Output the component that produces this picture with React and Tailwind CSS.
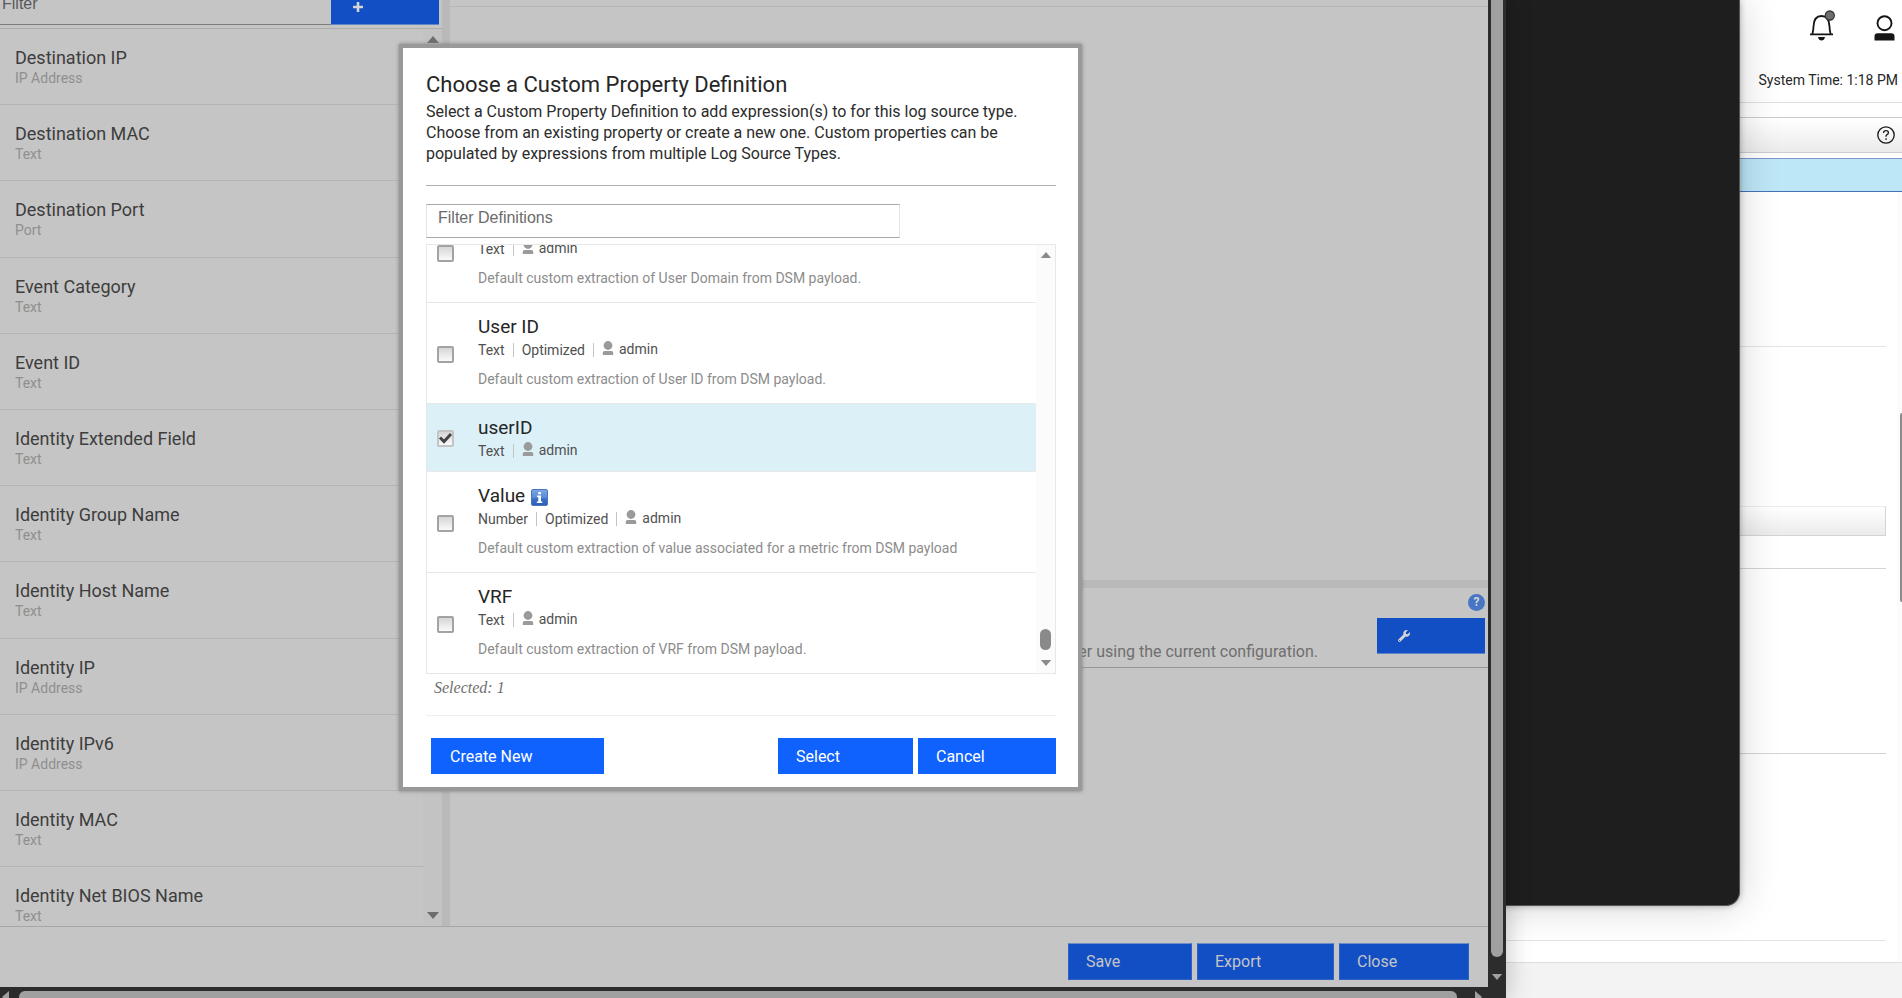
import { useState } from 'react';
import { FaWrench } from 'react-icons/fa';

const PROPERTIES = [
  { name: 'Destination IP', type: 'IP Address' },
  { name: 'Destination MAC', type: 'Text' },
  { name: 'Destination Port', type: 'Port' },
  { name: 'Event Category', type: 'Text' },
  { name: 'Event ID', type: 'Text' },
  { name: 'Identity Extended Field', type: 'Text' },
  { name: 'Identity Group Name', type: 'Text' },
  { name: 'Identity Host Name', type: 'Text' },
  { name: 'Identity IP', type: 'IP Address' },
  { name: 'Identity IPv6', type: 'IP Address' },
  { name: 'Identity MAC', type: 'Text' },
  { name: 'Identity Net BIOS Name', type: 'Text' },
];

const DEFINITIONS = [
  {
    id: 'user-domain',
    name: 'User Domain',
    meta: ['Text'],
    description: 'Default custom extraction of User Domain from DSM payload.',
  },
  {
    id: 'user-id',
    name: 'User ID',
    meta: ['Text', 'Optimized'],
    description: 'Default custom extraction of User ID from DSM payload.',
  },
  { id: 'userid', name: 'userID', meta: ['Text'] },
  {
    id: 'value',
    name: 'Value',
    info: true,
    meta: ['Number', 'Optimized'],
    description: 'Default custom extraction of value associated for a metric from DSM payload',
  },
  {
    id: 'vrf',
    name: 'VRF',
    meta: ['Text'],
    description: 'Default custom extraction of VRF from DSM payload.',
  },
];

function Triangle({ className, points = '0,7 6,0 12,7', box = '0 0 12 7' }) {
  return (
    <svg viewBox={box} className={className} fill="currentColor" aria-hidden="true">
      <polygon points={points} />
    </svg>
  );
}

function OwnerIcon() {
  return (
    <svg viewBox="0 0 12 14" className="mb-[3px] w-[12px] h-[14px] text-[#9a9a9a]" fill="currentColor" aria-hidden="true">
      <circle cx="6" cy="4.5" r="4.4" />
      <path d="M0.800 14v-2.200q0-1.700 1.800-1.700h6.800q1.800 0 1.800 1.700V14z" />
    </svg>
  );
}

function InfoIcon() {
  return (
    <svg viewBox="0 0 17 17" className="mt-[2px] w-[17px] h-[17px]" aria-hidden="true">
      <defs>
        <linearGradient id="info-fill" x1="0" y1="0" x2="0" y2="1">
          <stop offset="0" stopColor="#7da7e6" />
          <stop offset="0.5" stopColor="#5b8ad6" />
          <stop offset="0.52" stopColor="#3f74c8" />
          <stop offset="1" stopColor="#2a5db8" />
        </linearGradient>
      </defs>
      <rect x="0.5" y="0.5" width="16" height="16" rx="1.5" fill="url(#info-fill)" stroke="#4a78c0" />
      <path d="M7.3 3h2.6v2.3H7.3zM6 6.5h4v6h1.3V14H5.9v-1.5h1.4V8H6z" fill="#fff" />
    </svg>
  );
}

function BellIcon() {
  return (
    <svg viewBox="0 0 26 31" className="w-[26px] h-[31px]" fill="none" aria-hidden="true">
      <path
        d="M1 24.3h23M3.4 24c.4-2.2 1-3.6 1.1-7.6C4.7 9.600 7.500 6 12.500 6s7.800 3.600 8 10.400c.1 4 .7 5.400 1.100 7.600"
        stroke="#161616"
        strokeWidth="1.8"
      />
      <path d="M9 27h7q-.7 3.500-3.500 3.500T9 27z" fill="#161616" />
      <circle cx="20.800" cy="5.500" r="4.500" fill="#6f6f6f" stroke="#333" strokeWidth="1.300" />
    </svg>
  );
}

function UserIcon() {
  return (
    <svg viewBox="0 0 21 26" className="w-[21px] h-[26px]" fill="none" aria-hidden="true">
      <circle cx="10.500" cy="8.200" r="7" stroke="#161616" strokeWidth="1.900" />
      <path d="M0.500 25.500v-4q0-3.200 3.200-3.200h13.600q3.200 0 3.200 3.200v4z" fill="#161616" />
    </svg>
  );
}

function HelpIcon() {
  return (
    <svg viewBox="0 0 18 18" className="w-[18px] h-[18px]" fill="none" stroke="#161616" aria-hidden="true">
      <circle cx="9" cy="9" r="8.200" strokeWidth="1.300" />
      <path d="M6.600 7V6.600q0-1.900 2.400-1.900t2.400 2q0 1.300-1.400 1.900-1 .5-1 1.700v.5" strokeWidth="1.300" />
      <circle cx="9" cy="13" r="0.500" fill="#161616" strokeWidth="0.700" />
    </svg>
  );
}

// Console page that sits behind the open windows
function Console() {
  return (
    <div className="h-full flex flex-col bg-white text-[#262626]">
      <div className="h-[103px] border-b border-[#e0e0e0] flex flex-col items-end pt-[10px] shrink-0">
        <div className="flex items-end gap-[39px] pr-[7px]">
          <button type="button" aria-label="Notifications">
            <BellIcon />
          </button>
          <button type="button" aria-label="User menu">
            <UserIcon />
          </button>
        </div>
        <p className="mt-[29px] pr-1 text-[14px] leading-[20px]">System Time: 1:18 PM</p>
      </div>
      <div className="mt-[14px] h-[36px] border-y border-[#cccccc] bg-linear-to-b from-white to-[#ebebeb] flex items-center justify-end pr-[7px] shrink-0">
        <button type="button" aria-label="Help">
          <HelpIcon />
        </button>
      </div>
      <div className="mt-[5px] h-[34px] border-t border-b border-t-[#7f95c6] border-b-[#4573b5] bg-[#bde6f7] shrink-0" />
      <div className="flex-1 flex">
        <div className="flex-1 pr-[11px]">
          <div className="h-[155px] border-b border-[#e4e4e4]" />
          <div className="mt-[159px] h-[30px] border border-[#d4d4d4] border-t-[#ececec] bg-linear-to-b from-white to-[#ebebeb]" />
          <div className="h-[33px] border-b border-[#d4d4d4]" />
          <div className="h-[185px] border-b border-[#d4d4d4]" />
          <div className="h-[187px] border-b border-[#e4e4e4]" />
        </div>
        <div className="w-[5px] bg-[#fbfbfb] flex flex-col items-end pt-[221px] overflow-hidden">
          <div className="w-[2px] h-[189px] rounded-l-full bg-[#8a8a8a]" />
        </div>
      </div>
      <div className="h-[36px] border-t border-[#dedede] bg-[#f3f3f3] shrink-0" />
    </div>
  );
}

function IconButton({ label, children }) {
  return (
    <button
      type="button"
      aria-label={label}
      className="w-[108px] h-[36px] pl-[21px] bg-[#124fc5] text-[#d4d4d4] border-b border-[#5f86c9] flex items-center shrink-0"
    >
      {children}
    </button>
  );
}

function Sidebar() {
  return (
    <aside className="w-[442px] shrink-0 flex flex-col">
      <div className="h-[25px] flex items-end overflow-hidden shrink-0">
        <input
          type="text"
          aria-label="Filter properties"
          placeholder="Filter"
          className="flex-1 min-w-0 h-[42px] pl-[2px] border-b border-[#7c7c7c] bg-transparent text-[16px] font-['Liberation_Sans',sans-serif] placeholder:text-[#5a5a5a] outline-none"
        />
        <IconButton label="Add property">
          <svg viewBox="0 0 12 12" className="w-[12px] h-[12px]" fill="none" stroke="currentColor" strokeWidth="2.6">
            <path d="M6 1v10M1 6h10" />
          </svg>
        </IconButton>
        <div className="w-[3px]" />
      </div>
      <div className="mt-[3px] flex-1 flex border-t border-[#acacac]">
        <ul className="flex-1 flex flex-col">
          {PROPERTIES.map((property) => (
            <li
              key={property.name}
              className="flex-1 last:flex-none last:h-[59px] overflow-hidden pl-[15px] pt-[18px] border-b last:border-b-0 border-[#b4b4b4]"
            >
              <p className="text-[18px] leading-[22px] text-[#3d3d3d]">{property.name}</p>
              <p className="text-[14px] leading-[18px] text-[#8f8f8f]">{property.type}</p>
            </li>
          ))}
        </ul>
        <div className="w-[19px] flex flex-col items-center justify-between py-[7px] text-[#6d6d6d] bg-[#c3c3c3]">
          <Triangle className="w-[12px] h-[7px]" />
          <Triangle className="w-[12px] h-[7px]" points="0,0 12,0 6,7" />
        </div>
      </div>
    </aside>
  );
}

function EditorWindow() {
  return (
    <div className="h-full bg-[#2c2c2c] flex flex-col">
      <div className="flex-1 min-h-0 flex">
        <div className="flex-1 flex flex-col bg-[#c5c5c5]">
          <div className="flex-1 min-h-0 flex">
            <Sidebar />
            <div className="w-2 bg-[#b9b9b9]" />
            <main className="flex-1 flex flex-col">
              <div className="h-[580px] pt-[6px]">
                <div className="border-t border-[#b7b7b7]" />
              </div>
              <div className="h-2 bg-[#b9b9b9]" />
              <section className="h-[80px] border-b border-[#969696] pt-[6px] pr-[3px] flex flex-col items-end">
                <button
                  type="button"
                  aria-label="Preview help"
                  className="w-[17px] h-[17px] rounded-full bg-[#4776c4] text-[#d6d6d6] text-[12px] leading-[17px] font-bold"
                >
                  ?
                </button>
                <div className="mt-[7px] flex items-start gap-[59px]">
                  <p className="pt-6 text-[16px] leading-[20px] text-[#6f6f6f]">
                    viewer using the current configuration.
                  </p>
                  <IconButton label="Configure preview">
                    <FaWrench size={12} />
                  </IconButton>
                </div>
              </section>
            </main>
          </div>
          <footer className="h-[61px] border-t border-[#a6a6a6] pt-4 pr-[19px] flex justify-end gap-[5px] shrink-0">
            {[
              ['Save', 'w-[124px]'],
              ['Export', 'w-[137px]'],
              ['Close', 'w-[130px]'],
            ].map(([label, width]) => (
              <button
                key={label}
                type="button"
                className={`${width} h-[37px] pl-[17px] pt-px text-left text-[16px] bg-[#124fc5] text-[#c5c5c5] border border-[#2f62c0] border-t-[#6f8fc4]`}
              >
                {label}
              </button>
            ))}
          </footer>
        </div>
        <div className="w-[18px] flex flex-col items-center pb-[7px] text-[#a0a0a0]">
          <div className="w-[12px] flex-1 rounded-b-full bg-[#a0a0a0]" />
          <Triangle className="mt-[17px] w-[12px] h-[6px]" points="0,0 12,0 6,7" />
        </div>
      </div>
      <div className="h-[11px] pt-1 flex gap-[10px] pl-[2px] pr-[24px] text-[#a0a0a0] overflow-hidden">
        <Triangle className="w-[7px] h-[12px] shrink-0" box="0 0 7 12" points="7,0 7,12 0,6" />
        <div className="flex-1 h-[12px] rounded-full bg-[#a0a0a0]" />
        <Triangle className="ml-2 w-[7px] h-[12px] shrink-0" box="0 0 7 12" points="0,0 7,6 0,12" />
      </div>
    </div>
  );
}

function DefinitionRow({ definition, checked, onToggle }) {
  return (
    <li
      className={`shrink-0 border-b last:border-b-0 border-[#e8e8e8] flex items-center ${
        checked ? 'bg-[#dcf0f8]' : 'bg-white'
      }`}
    >
      <span className="relative mt-[2px] ml-[10px] w-[17px] h-[17px] shrink-0">
        <input
          id={definition.id}
          type="checkbox"
          checked={checked}
          onChange={onToggle}
          className="peer block appearance-none w-[17px] h-[17px] rounded-[2px] border-2 border-[#a3a3a3] checked:border-[#c4c4c4] bg-linear-to-b from-[#d6d6d6] to-[#fafafa]"
        />
        <svg
          viewBox="0 0 17 17"
          className="absolute inset-0 hidden peer-checked:block pointer-events-none"
          fill="none"
          stroke="#444"
          strokeWidth="3"
          aria-hidden="true"
        >
          <path d="M3 7.500l4 4L14 4" />
        </svg>
      </span>
      <label htmlFor={definition.id} className="ml-6 pt-3 pb-[10px]">
        <span className="flex items-center gap-[6px] text-[19px] leading-[24px] text-[#262626]">
          {definition.name}
          {definition.info && <InfoIcon />}
        </span>
        <span className="flex items-center h-[21px] text-[14px] text-[#505050]">
          {definition.meta.map((item) => (
            <span key={item} className="pr-2 mr-2 border-r border-[#c4c4c4] leading-[14px]">
              {item}
            </span>
          ))}
          <OwnerIcon />
          <span className="ml-[5px]">admin</span>
        </span>
        {definition.description && (
          <span className="block mt-2 pb-[3px] text-[14px] leading-[22px] text-[#8c8c8c]">
            {definition.description}
          </span>
        )}
      </label>
    </li>
  );
}

function DefinitionDialog() {
  const [selected, setSelected] = useState(['userid']);

  const toggle = (id) => {
    setSelected((prev) => (prev.includes(id) ? prev.filter((item) => item !== id) : [...prev, id]));
  };

  return (
    <div
      role="dialog"
      aria-labelledby="dialog-title"
      className="absolute left-[399px] top-[44px] w-[683px] border-4 border-[#999999] bg-white shadow-[0_0_4px_#808080] pl-[23px] pr-[22px] pt-[23px] pb-[13px]"
    >
      <h1 id="dialog-title" className="text-[22px] leading-[28px] text-[#262626]">
        Choose a Custom Property Definition
      </h1>
      <p className="mt-[2px] text-[16px] leading-[21px] text-[#2c2c2c] w-[600px]">
        Select a Custom Property Definition to add expression(s) to for this log source type.
        <br />
        Choose from an existing property or create a new one. Custom properties can be
        <br />
        populated by expressions from multiple Log Source Types.
      </p>
      <hr className="mt-[21px] border-[#adadad]" />
      <input
        type="text"
        aria-label="Filter Definitions"
        placeholder="Filter Definitions"
        className="mt-[18px] block w-[474px] h-[34px] pl-[11px] pb-[6px] border border-[#e3e3e3] border-y-[#a9a9a9] text-[16px] font-['Liberation_Sans',sans-serif] placeholder:text-[#6b6b6b] outline-none"
      />

      {/* List is scrolled to its end */}
      <div className="mt-[6px] h-[430px] border border-[#e8e8e8] flex">
        <ul className="flex-1 flex flex-col justify-end overflow-hidden">
          {DEFINITIONS.map((definition) => (
            <DefinitionRow
              key={definition.id}
              definition={definition}
              checked={selected.includes(definition.id)}
              onToggle={() => toggle(definition.id)}
            />
          ))}
        </ul>
        <div className="w-[19px] bg-[#fbfbfb] flex flex-col items-center py-[7px] text-[#8a8a8a]">
          <Triangle className="w-[12px] h-[6px]" />
          <div className="mt-auto w-[11px] h-[21px] rounded-full bg-[#8a8a8a]" />
          <Triangle className="mt-[10px] w-[12px] h-[6px]" points="0,0 12,0 6,7" />
        </div>
      </div>

      <p className="mt-[3px] pl-2 text-[16px] leading-[22px] italic text-[#6f6f6f] font-['Liberation_Serif',serif]">
        Selected: {selected.length}
      </p>
      <hr className="mt-4 border-[#eeeeee]" />
      <div className="mt-[22px] pl-[5px] flex gap-[5px] text-[16px] text-white">
        <button type="button" className="w-[173px] h-[36px] pl-[19px] pt-px mr-auto text-left bg-[#0f62fe]">
          Create New
        </button>
        <button type="button" className="w-[135px] h-[36px] pl-[18px] pt-px text-left bg-[#0f62fe]">
          Select
        </button>
        <button type="button" className="w-[138px] h-[36px] pl-[18px] pt-px text-left bg-[#0f62fe]">
          Cancel
        </button>
      </div>
    </div>
  );
}

export default function App() {
  return (
    <div className="relative h-screen w-full overflow-hidden font-['Roboto',sans-serif]">
      <Console />
      <div className="absolute top-0 left-0 right-[162px] bottom-[92px] rounded-br-[14px] bg-[#1e1e1e] border-r border-b border-[#555] shadow-[0_0_40px_rgba(0,0,0,0.18),0_0_6px_rgba(0,0,0,0.3)]" />
      <div className="absolute inset-y-0 left-0 right-[396px] shadow-[0_0_24px_rgba(0,0,0,0.25)]">
        <EditorWindow />
        <DefinitionDialog />
      </div>
    </div>
  );
}
